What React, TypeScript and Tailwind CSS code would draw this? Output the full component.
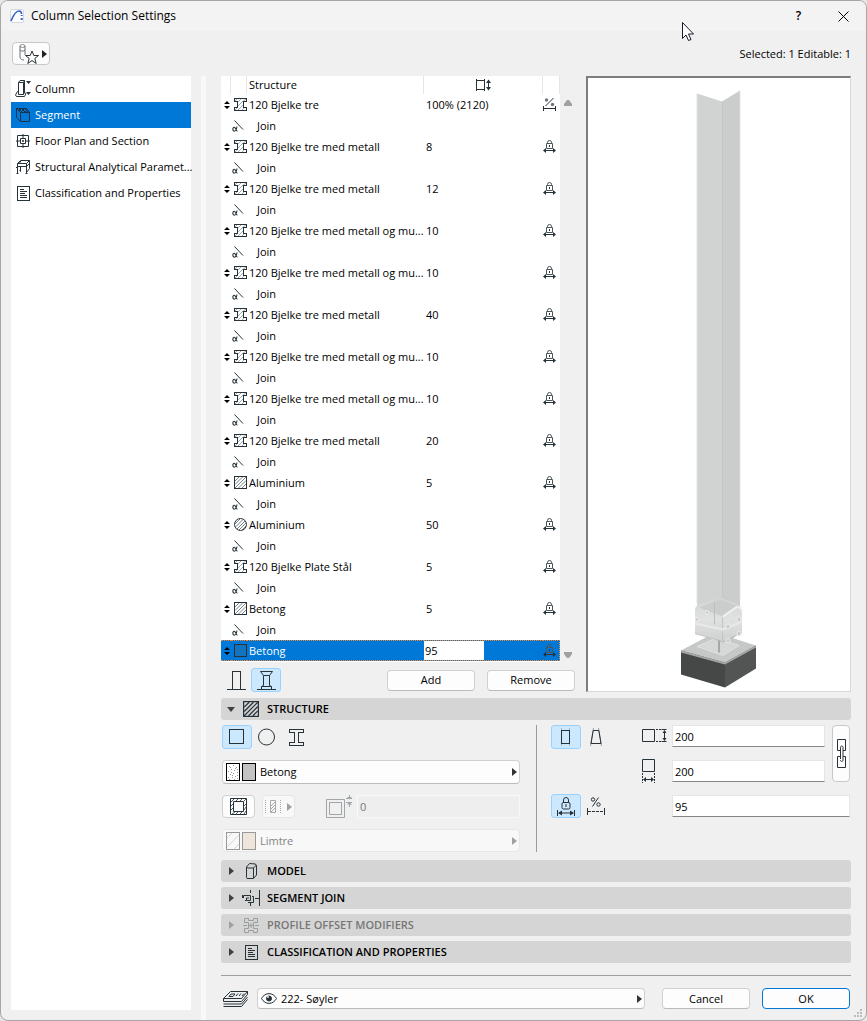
import React, { useState } from 'react';

type IconProps = { className?: string };
type Shape = 'beam' | 'rect' | 'circle';

type SegmentRow = {
  name: string;
  value: string;
  shape: Shape;
};

const segments: SegmentRow[] = [
  { name: '120 Bjelke tre', value: '100% (2120)', shape: 'beam' },
  { name: '120 Bjelke tre med metall', value: '8', shape: 'beam' },
  { name: '120 Bjelke tre med metall', value: '12', shape: 'beam' },
  { name: '120 Bjelke tre med metall og mu...', value: '10', shape: 'beam' },
  { name: '120 Bjelke tre med metall og mu...', value: '10', shape: 'beam' },
  { name: '120 Bjelke tre med metall', value: '40', shape: 'beam' },
  { name: '120 Bjelke tre med metall og mu...', value: '10', shape: 'beam' },
  { name: '120 Bjelke tre med metall og mu...', value: '10', shape: 'beam' },
  { name: '120 Bjelke tre med metall', value: '20', shape: 'beam' },
  { name: 'Aluminium', value: '5', shape: 'rect' },
  { name: 'Aluminium', value: '50', shape: 'circle' },
  { name: '120 Bjelke Plate Stål', value: '5', shape: 'beam' },
  { name: 'Betong', value: '5', shape: 'rect' },
  { name: 'Betong', value: '95', shape: 'rect' },
];

const ink = '#263238';

/* ---------- icons ---------- */

const AppIcon = () => (
  <svg width="14" height="14" viewBox="0 0 14 14" fill="none">
    <rect x="0.500" y="0.500" width="13" height="13" rx="1.500" fill="#fdfdfd" stroke="#d4d8e4" />
    <path d="M1 12C3 7 5.500 2 9 2c2 0 2.500 1 2.500 3" stroke="#3a62c4" strokeWidth="1.700" />
    <path d="M11.700 6v1M11.700 9v2" stroke="#3a62c4" strokeWidth="2" />
  </svg>
);

const FavoriteIcon = () => (
  <svg width="20" height="20" viewBox="0 0 20 20" fill="none" stroke={ink}>
    <ellipse cx="3.500" cy="2" rx="2.500" ry="1.500" stroke="#8a9094" />
    <path d="M1 2v11c0 2 2 3 4 3M6 2v9M1 6c1 1.500 4 1.500 5 0" stroke="#6a7276" />
    <path d="M13 7l1.800 4.500h4.700l-3.700 3 1.400 5-4.200-3-4.200 3 1.400-5-3.700-3h4.700z" fill="#fdfdfd" />
  </svg>
);

const ColumnIcon = () => (
  <svg width="16" height="18" viewBox="0 0 16 18" fill="none" stroke={ink}>
    <path d="M3.500 14.500v-12l1.500-2h4.500v12l-1 2zM3.500 2.500h5M8.500 2.500v12M8.500 2.500l1-2" />
    <path d="M3.500 11.500h-1l-2 3.500 1 1.500h8l1.500-3-1.500-1" />
    <path d="M11 1h5l-2.500 3zM11 12h5l-2.500 3z" fill={ink} stroke="none" />
  </svg>
);

const CubeIcon = () => (
  <svg width="14" height="14" viewBox="0 0 14 14" fill="none" stroke="#1b3348">
    <path d="M4.500 4.500h9v9h-9zM4.500 4.500l-4-4v9l4 4M0.500 0.500h10l3 4" />
    <path d="M3 1l3 3M6 1l3 3M9 1l3 3M5 1L3 3M8 1L5 4M11 2L9 4" />
  </svg>
);

const FloorPlanIcon = () => (
  <svg width="14" height="14" viewBox="0 0 14 14" fill="none" stroke={ink}>
    <path d="M1.500 1.500h11v11h-11zM4.500 4.500h5v5h-5zM7 0v4M7 10v4M0 7h4M10 7h4M6 7h2M7 6v2" />
  </svg>
);

const AnalyticalIcon = () => (
  <svg width="15" height="14" viewBox="0 0 15 14" fill="none" stroke={ink}>
    <path d="M1.500 13.500v-10l3-3h9v8M10.500 13v-9.500M1.500 3.500h9l3-3M1.500 6.500h9l3-3M4.500 6.500v5l-1-1M13.500 8.500l-3 4M3 3.500l2-2.500M0 8l2-2" />
    <path d="M0.500 13.500h2M9.500 13.500h2" />
  </svg>
);

const PropertiesIcon = ({ className }: IconProps) => (
  <svg className={className} width="13" height="15" viewBox="0 0 13 15" fill="none" stroke={ink} shapeRendering="crispEdges">
    <path d="M0.500 0.500h12v14h-12zM3 3.500h4M3 5.500h7M3 7.500h5M3 9.500h7M3 11.500h7" />
  </svg>
);

const BeamHatched = ({ className }: IconProps) => (
  <svg className={className} width="13" height="13" viewBox="0 0 13 13" fill="none" stroke={ink}>
    <path d="M1 3l2-2M4 4l3-3M4 8l5-5M4 12l5-5M8 12l3-3M8 4l4-3M1 12l2-2" stroke="#8a9296" strokeWidth="0.800" />
    <path d="M0.500 0.500h12v3h-3v6h3v3H0.500v-3h3v-6h-3z" shapeRendering="crispEdges" />
  </svg>
);

const RectHatched = ({ size = 13, dark = false }: { size?: number; dark?: boolean }) => (
  <svg width={size} height={size} viewBox="0 0 13 13" fill="none" stroke={ink}>
    <path
      d="M1 5l4-4M1 8.500L8.500 1M1 12L12 1M4.500 12L12 4.500M8 12l4-4"
      stroke={dark ? ink : '#596266'}
      strokeWidth={dark ? 1 : 0.800}
    />
    <rect x="0.500" y="0.500" width="12" height="12" />
  </svg>
);

const CircleHatched = () => (
  <svg width="13" height="13" viewBox="0 0 13 13" fill="none" stroke={ink}>
    <path d="M1 6l5-5M1.500 9L9 1.500M3 11l8-8M5 12l7-7M8 12l4-4" stroke="#596266" strokeWidth="0.800" />
    <circle cx="6.500" cy="6.500" r="6" />
  </svg>
);

const JoinIcon = () => (
  <svg width="12" height="12" viewBox="0 0 12 12" fill="none" stroke={ink}>
    <path d="M2.500 0.500l8.500 9" />
    <path d="M5 6.500C4.600 9 3.700 11.200 2.300 11.200c-1.900 0-1.900-4 0-4 1.400 0 1.600 4 3.200 4" strokeWidth="1.100" />
  </svg>
);

const SortHandle = () => (
  <svg width="6" height="8" viewBox="0 0 6 8" fill="#000">
    <path d="M3 0l3 3H0zM3 8l3-3H0z" />
  </svg>
);

const LockWidth = () => (
  <svg width="13" height="13" viewBox="0 0 13 13" fill="none" stroke={ink}>
    <path d="M4.500 4V2.300a2 1.800 0 0 1 4 0V4M3.500 3.500h6v5h-6z" stroke="#4a5559" />
    <path d="M6.500 5v2M2 10.500h9" />
    <path d="M0 10.500L3 8v5zM13 10.500L10 8v5z" fill={ink} stroke="none" />
  </svg>
);

const PercentWidth = () => (
  <svg width="13" height="13" viewBox="0 0 13 13" fill="none" stroke={ink}>
    <path d="M2.500 8l8-8M0.500 8v5M12.500 8v5M1 10.500h11" />
    <circle cx="3.500" cy="2" r="1.700" fill="#6f777a" stroke="none" />
    <circle cx="9.500" cy="6.500" r="1.700" fill="#6f777a" stroke="none" />
  </svg>
);

const HeightHeader = () => (
  <svg width="15" height="12" viewBox="0 0 15 12" fill="none" stroke={ink}>
    <path d="M0.500 1.500h8v9h-8zM0.500 0v12M8.500 0v12M12.500 3v6" />
    <path d="M12.500 0.500L15 4h-5zM12.500 11.500L15 8h-5z" fill={ink} stroke="none" />
  </svg>
);

const SimpleColumn = () => (
  <svg width="19" height="19" viewBox="0 0 19 19" fill="none" stroke={ink} shapeRendering="crispEdges">
    <path d="M0 18.500h19M5.500 18V0.500h8V18" />
  </svg>
);

const ComplexColumn = () => (
  <svg width="19" height="19" viewBox="0 0 19 19" fill="none" stroke={ink}>
    <path d="M0 18.500h19M3.500 0.500h12M3.500 0.500l3 4v10l-2 1v3M15.500 0.500l-3 4v10l2 1v3M6.500 4.500h6M4.500 15.500h10" />
  </svg>
);

const BoxIcon = () => (
  <svg width="16" height="16" viewBox="0 0 16 16" fill="none" stroke={ink} shapeRendering="crispEdges">
    <rect x="0.500" y="0.500" width="14" height="14" />
  </svg>
);

const CircleIcon = () => (
  <svg width="18" height="18" viewBox="0 0 18 18" fill="none" stroke={ink}>
    <circle cx="8.500" cy="9" r="8" />
  </svg>
);

const ProfileIcon = () => (
  <svg width="16" height="17" viewBox="0 0 16 17" fill="none" stroke={ink} shapeRendering="crispEdges">
    <path d="M0.500 0.500h14v3h-5v10h5v3H0.500v-3h5v-10h-5z" />
  </svg>
);

const VeneerIcon = () => (
  <svg width="17" height="17" viewBox="0 0 17 17" fill="none" stroke={ink}>
    <path d="M0.500 0.500h16v16H0.500zM3.500 3.500h10v10h-10z" />
    <path d="M1 4l3-3M6 3l2-2M10 3l2-2M14 3l2-2M1 8l2-2M1 12l2-2M2 16l3-2M6 16l2-2M10 16l2-2M14 16l2-3M14 8l2-2M14 12l2-3" strokeWidth="0.800" />
  </svg>
);

const VeneerTypeIcon = () => (
  <svg width="16" height="13" viewBox="0 0 16 13" fill="none" stroke="#a5a9ab">
    <path d="M0.500 0v13M15.500 0v13" strokeDasharray="1 1" />
    <path d="M5.500 0.500h5v12h-5zM6 6l4-4M6 9l4-4M6 12l4-4" />
  </svg>
);

const ThicknessIcon = () => (
  <svg width="26" height="24" viewBox="0 0 26 24" fill="none" stroke="#a0a5a7">
    <path d="M0.500 4.500h18v18h-18zM3.500 7.500h12v12h-12zM20 3.500h6M20 7.500h6M23.500 0v3M23.500 8v4" />
    <path d="M21 2h5l-2.500 2.500zM21 9.500h5L23.500 7z" fill="#a0a5a7" stroke="none" />
  </svg>
);

const StraightSegment = () => (
  <svg width="10" height="18" viewBox="0 0 10 18" fill="none" stroke={ink} shapeRendering="crispEdges">
    <path d="M0.500 0v18M8.500 0v18" stroke="#9db6c8" />
    <path d="M0.500 2.500h8v13h-8z" />
  </svg>
);

const TaperedSegment = () => (
  <svg width="12" height="18" viewBox="0 0 12 18" fill="none" stroke={ink}>
    <path d="M3.500 0l-3 18M8.500 0l3 18" stroke="#9aa1a4" />
    <path d="M3.200 2.500h5.600l2.200 13H1z" />
  </svg>
);

const DepthIcon = () => (
  <svg width="25" height="14" viewBox="0 0 25 14" fill="none" stroke={ink}>
    <path d="M0.500 0.500h12v12h-12zM22.500 2v9M19.500 0.500h5M19.500 12.500h5" />
    <path d="M14 0.500h6M14 12.500h6" strokeDasharray="2 1" />
    <path d="M22.500 1l2 3h-4zM22.500 12l2-3h-4z" fill={ink} stroke="none" />
  </svg>
);

const WidthIcon = () => (
  <svg width="13" height="24" viewBox="0 0 13 24" fill="none" stroke={ink}>
    <path d="M0.500 0.500h12v12h-12zM2 20.500h9" />
    <path d="M0.500 14v10M12.500 14v10" strokeDasharray="2 1" />
    <path d="M1 20.500l3-2.500v5zM12 20.500L9 18v5z" fill={ink} stroke="none" />
  </svg>
);

const LockLengthIcon = () => (
  <svg width="18" height="19" viewBox="0 0 18 19" fill="none" stroke={ink}>
    <path d="M6.500 6V3a2.500 2.500 0 0 1 5 0V6M0.500 13v6M17.500 13v6M2 16h14M9 7v3" />
    <rect x="5" y="5.500" width="8" height="6.500" rx="1.500" />
    <path d="M1 16l4-2.500v5zM17 16l-4-2.500v5z" fill={ink} stroke="none" />
  </svg>
);

const PercentLengthIcon = () => (
  <svg width="18" height="18" viewBox="0 0 18 18" fill="none" stroke={ink}>
    <path d="M5.500 9.500l6-9M0.500 11v7M17.500 11v7" />
    <path d="M1 14.500h16" strokeDasharray="3 1" />
    <circle cx="6" cy="2.500" r="1.700" />
    <circle cx="11.500" cy="7.500" r="1.700" />
  </svg>
);

const ChainIcon = () => (
  <svg width="9" height="29" viewBox="0 0 9 29" fill="none" stroke={ink}>
    <path d="M3 11.500H0.500v-11h8v11H6M3 17.500H0.500v11h8v-11H6" />
    <path d="M3.500 20V8.500c0-2 2.500-2 2.500 0V21c0 2-2.500 2-2.500 0" />
  </svg>
);

const ModelIcon = () => (
  <svg width="11" height="16" viewBox="0 0 11 16" fill="none" stroke={ink}>
    <path d="M0.500 4l3-3.500 6 0.500 1 2v9l-3 3.500H1l-0.500-1zM0.500 4l1 1h6l3-3M7.500 5v10" />
  </svg>
);

const SegmentJoinIcon = () => (
  <svg width="18" height="16" viewBox="0 0 18 16" fill="none" stroke={ink}>
    <path d="M8.500 0v3M8.500 13v3M17.500 0v16M13 8.500h4" />
    <path d="M1.500 8V5.500h7v5h-4v-2.500h2.500M0.500 5v3M3 10.500h1.500M6 12.500h5.500v-6H10" />
  </svg>
);

const OffsetIcon = () => (
  <svg width="16" height="15" viewBox="0 0 16 15" fill="none" stroke="#9a9d9e">
    <path d="M1.500 0.500h4v2h5v-2h4v4h-4v6h4v4h-4v-2h-5v2h-4v-4h4v-6h-4zM8 5v5M0 7.500h4M6 7.500h4M12 7.500h4" />
  </svg>
);

const LayersIcon = () => (
  <svg width="26" height="16" viewBox="0 0 26 16" fill="none" stroke={ink}>
    <path d="M7.500 0.500h17l-6 7h-18zM0.500 10.500h18l6-7M0.500 13h18l6-7M0.500 15.500h18l6-7M0.500 7.500v3M24.500 0.500v3" />
    <path d="M8 3h4l-2 2.500H6zM13 5l2-2.500M16 5l2-2.500M19 5l2-2.500" />
  </svg>
);

const EyeIcon = () => (
  <svg width="16" height="11" viewBox="0 0 16 11" fill="none" stroke={ink}>
    <path d="M0.500 5.500C4-1 12-1 15.500 5.500 12 12 4 12 0.500 5.500z" />
    <circle cx="8" cy="5.500" r="2.500" fill={ink} />
    <circle cx="7" cy="4" r="0.900" fill="#fff" stroke="none" />
  </svg>
);

const ArrowRight = ({ className }: IconProps) => (
  <svg className={className} width="5" height="8" viewBox="0 0 5 8" fill="currentColor">
    <path d="M0 0l5 4-5 4z" />
  </svg>
);

const ArrowDown = ({ className }: IconProps) => (
  <svg className={className} width="8" height="5" viewBox="0 0 8 5" fill="currentColor">
    <path d="M0 0h8L4 5z" />
  </svg>
);

const ScrollArrow = ({ className }: IconProps) => (
  <svg className={className} width="8" height="6" viewBox="0 0 8 6" fill="currentColor">
    <path d="M0 0h8v2L5 6H3L0 2z" />
  </svg>
);

const ConcreteSwatch = () => (
  <svg width="14" height="18" viewBox="0 0 14 18" fill="none" shapeRendering="crispEdges">
    <rect x="0.500" y="0.500" width="13" height="17" fill="#fff" stroke="#000" />
    <path
      d="M3 3h1M7 2h1M10 4h1M5 6h1M2 8h1M8 7h1M11 9h1M4 11h1M7 10h1M2 14h1M6 14h1M9 13h1M11 15h1M4 4h1M9 5h1M6 12h1M11 12h1M3 16h1M8 16h1M5 9h1M11 6h1"
      stroke="#999"
    />
  </svg>
);

const WoodSwatch = () => (
  <svg width="14" height="18" viewBox="0 0 14 18" fill="none">
    <path d="M1 6l5-5M1 15L13 3M8 17l5-5" stroke="#d6d6d6" />
    <rect x="0.500" y="0.500" width="13" height="17" stroke="#999" />
  </svg>
);

const shapeIcons: Record<Shape, React.ReactNode> = {
  beam: <BeamHatched />,
  rect: <RectHatched />,
  circle: <CircleHatched />,
};

/* ---------- 3D preview ---------- */

const Preview = () => (
  <svg className="w-full h-full" viewBox="0 0 262 612" fill="none" role="img" aria-label="Column preview">
    <defs>
      <linearGradient id="bracket" x1="0" y1="0" x2="0" y2="1">
        <stop offset="0" stopColor="#d3d5d4" />
        <stop offset="0.500" stopColor="#e0e1e1" />
        <stop offset="1" stopColor="#cfd1d0" />
      </linearGradient>
    </defs>
    {/* footing */}
    <path d="M93 572l34-18 41 13-31 17z" fill="#c5c8c7" />
    <path d="M93 572l44 12v25l-44-13z" fill="#464848" />
    <path d="M137 584l31-17v23l-31 19z" fill="#535555" />
    <path d="M93 572l44 12 31-17v2l-31 17-44-12z" fill="#a3a6a5" />
    {/* base plate */}
    <path d="M109 568l20-9 22 8-16 10z" fill="#d6d8d7" stroke="#dfe0e0" />
    <path d="M117 557l14-5 17 6-13 6z" fill="#b2b5b4" />
    {/* column */}
    <path d="M109 15l25 8v520l-25-8z" fill="#d0d3d2" />
    <path d="M134 23l18-11v520l-18 11z" fill="#cbcccc" />
    <path d="M109 15v510M152 12v510" stroke="#e2e3e3" />
    <path d="M134.500 23v505" stroke="#c3c6c5" />
    {/* bracket */}
    <path d="M107 532q0-5 4-6l21-7 20 8q2 2 2 5v22l-19 9-28-8z" fill="url(#bracket)" />
    <path d="M111 529l21-8 19 7-16 10z" fill="#cbcdcc" />
    <path d="M107 555l28 8 19-9M134.500 539v23" stroke="#c3c5c5" />
    <path d="M107 545l28 6 19-8" stroke="#e9e9e9" strokeWidth="2" />
    <path d="M135 538l13-9q6-1 6 4" stroke="#f2f2f2" strokeWidth="2" />
    <path d="M126.500 524v22" stroke="#bcbebe" />
    <path d="M131 562v12" stroke="#a5a8a7" strokeWidth="2" />
    <g fill="#c8caca" stroke="#eeeeee">
      <ellipse cx="140" cy="548" rx="2" ry="2.500" />
      <ellipse cx="140" cy="562" rx="2" ry="2.500" />
      <ellipse cx="151" cy="541" rx="2" ry="2.500" />
      <ellipse cx="151" cy="555" rx="2" ry="2.500" />
      <ellipse cx="119" cy="534" rx="1.500" ry="2" />
      <ellipse cx="109" cy="541" rx="1.500" ry="2" />
    </g>
  </svg>
);

/* ---------- building blocks ---------- */

const PushButton = ({ children, primary, className }: { children: React.ReactNode; primary?: boolean; className?: string }) => (
  <button
    className={`h-[21px] w-[88px] rounded border bg-[#fdfdfd] text-center hover:bg-white ${
      primary ? 'border-[#0078d7]' : 'border-[#d0d0d0] border-b-[#bbb]'
    } ${className ?? ''}`}
  >
    {children}
  </button>
);

const ToggleButton = ({
  label,
  active,
  onClick,
  children,
}: {
  label: string;
  active: boolean;
  onClick: () => void;
  children: React.ReactNode;
}) => (
  <button
    aria-label={label}
    aria-pressed={active}
    onClick={onClick}
    className={`flex h-6 w-[30px] items-center justify-center rounded-[3px] border ${
      active ? 'border-[#99d1ff] bg-[#cce8ff]' : 'border-transparent'
    }`}
  >
    {children}
  </button>
);

const DropDown = ({
  label,
  value,
  disabled,
  className,
  children,
}: {
  label: string;
  value: string;
  disabled?: boolean;
  className?: string;
  children: React.ReactNode;
}) => (
  <label
    className={`flex items-center rounded border pr-[2px] pl-[3px] ${
      disabled ? 'border-[#e6e6e6] bg-[#f8f8f8] text-[#838383]' : 'border-[#d0d0d0] border-b-[#bbb] bg-[#fdfdfd]'
    } ${className ?? ''}`}
  >
    {children}
    <select aria-label={label} disabled={disabled} className="ml-1 min-w-0 flex-1 appearance-none bg-transparent opacity-100 outline-none">
      <option>{value}</option>
    </select>
    <ArrowRight className={disabled ? 'text-[#a0a0a0]' : 'text-[#333]'} />
  </label>
);

const NumberField = ({ label, value }: { label: string; value: string }) => (
  <input
    aria-label={label}
    defaultValue={value}
    className="h-[22px] w-full min-w-0 border border-[#e5e5e5] border-b-[#868686] bg-white px-[2px] outline-none"
  />
);

const SectionHeader = ({
  title,
  icon,
  open,
  disabled,
}: {
  title: string;
  icon: React.ReactNode;
  open?: boolean;
  disabled?: boolean;
}) => (
  <button
    disabled={disabled}
    aria-expanded={!!open}
    className={`flex h-[22px] w-full items-center rounded-[3px] bg-[#d5d5d5] pl-[5px] font-semibold ${
      disabled ? 'text-[#777]' : 'text-black'
    }`}
  >
    <span className="flex w-[10px] justify-center">
      {open ? <ArrowDown className="text-[#404040]" /> : <ArrowRight className={disabled ? 'text-[#a0a0a0]' : 'text-[#404040]'} />}
    </span>
    <span className="mx-[6px] flex w-[18px] justify-center">{icon}</span>
    <span className="ml-px">{title}</span>
  </button>
);

/* ---------- panels ---------- */

const navItems = [
  { name: 'Column', icon: <ColumnIcon /> },
  { name: 'Segment', icon: <CubeIcon /> },
  { name: 'Floor Plan and Section', icon: <FloorPlanIcon /> },
  { name: 'Structural Analytical Paramet...', icon: <AnalyticalIcon /> },
  { name: 'Classification and Properties', icon: <PropertiesIcon /> },
];

const Sidebar = () => {
  const [current, setCurrent] = useState('Segment');

  return (
    <nav className="w-[180px] shrink-0 bg-white">
      {navItems.map((item) => (
        <button
          key={item.name}
          onClick={() => setCurrent(item.name)}
          className={`flex h-[26px] w-full items-center whitespace-nowrap ${
            current === item.name ? 'bg-[#0078d7] text-white' : ''
          }`}
        >
          <span className="flex w-6 shrink-0 justify-center">{item.icon}</span>
          {item.name}
        </button>
      ))}
    </nav>
  );
};

const SegmentTable = () => (
  <div className="flex">
    <div className="flex-1 bg-white pb-px">
      <table className="w-full table-fixed border-separate border-spacing-0">
        <colgroup>
          <col className="w-[10px]" />
          <col className="w-[16px]" />
          <col className="w-[177px]" />
          <col />
          <col className="w-[17px]" />
        </colgroup>
        <thead>
          <tr className="h-[18px]">
            <th className="border-r border-[#e5e5e5] p-0" />
            <th className="border-r border-[#e5e5e5] p-0" />
            <th className="border-r border-[#e5e5e5] p-0 pl-[2px] text-left font-normal">Structure</th>
            <th className="border-r border-[#e5e5e5] p-0" aria-label="Height">
              <div className="flex justify-center"><HeightHeader /></div>
            </th>
            <th className="border-r border-[#e5e5e5] p-0" />
          </tr>
        </thead>
        <tbody>
          {segments.map((seg, i) => {
            const selected = i === segments.length - 1;
            const cell = selected ? 'border-y border-dotted border-[#ff8728] p-0' : 'p-0';
            return (
              <React.Fragment key={i}>
                <tr className={`h-[21px] ${selected ? 'bg-[#0078d7] text-white' : ''}`}>
                  <td className={cell}><div className="flex justify-end pr-px"><SortHandle /></div></td>
                  <td className={cell}><div className="flex justify-end">{shapeIcons[seg.shape]}</div></td>
                  <td className={`overflow-hidden whitespace-nowrap ${cell}`}><div className="pl-[2px]">{seg.name}</div></td>
                  <td className={cell}>
                    {selected ? (
                      <input
                        aria-label="Segment length"
                        defaultValue={seg.value}
                        className="block h-[19px] w-[60px] bg-white px-px text-black outline-none"
                      />
                    ) : (
                      <span className="pl-[2px]">{seg.value}</span>
                    )}
                  </td>
                  <td className={`${cell} ${selected ? 'border-r' : ''}`}>
                    <div className="flex">{i === 0 ? <PercentWidth /> : <LockWidth />}</div>
                  </td>
                </tr>
                {!selected && (
                  <tr className="h-[21px]">
                    <td className="p-0" colSpan={2}><div className="flex pl-[11px]"><JoinIcon /></div></td>
                    <td className="p-0"><div className="pl-[10px]">Join</div></td>
                    <td className="p-0" />
                    <td className="p-0" />
                  </tr>
                )}
              </React.Fragment>
            );
          })}
        </tbody>
      </table>
    </div>
    <div className="flex w-[15px] flex-col items-center justify-between pt-6 pb-1 text-[#a0a0a0]">
      <ScrollArrow className="rotate-180" />
      <ScrollArrow />
    </div>
  </div>
);

const StructurePanel = () => {
  const [shape, setShape] = useState('rect');
  const [taper, setTaper] = useState('straight');
  const [length, setLength] = useState('fixed');

  return (
    <div className="flex py-[5px] pr-px">
      <div className="flex w-[299px] shrink-0 flex-col gap-[11px] pl-px">
        <div className="flex">
          <ToggleButton label="Rectangle" active={shape === 'rect'} onClick={() => setShape('rect')}><BoxIcon /></ToggleButton>
          <ToggleButton label="Circle" active={shape === 'circle'} onClick={() => setShape('circle')}><CircleIcon /></ToggleButton>
          <ToggleButton label="Profile" active={shape === 'profile'} onClick={() => setShape('profile')}><ProfileIcon /></ToggleButton>
        </div>
        <DropDown label="Building material" value="Betong" className="h-6">
          <ConcreteSwatch />
          <span className="ml-[2px] h-[18px] w-[14px] border border-black bg-[#c3c3c3]" />
        </DropDown>
        <div className="flex h-[23px]">
          <button aria-label="Veneer" className="flex w-[33px] items-center justify-center rounded border border-[#d0d0d0] bg-[#fdfdfd]">
            <VeneerIcon />
          </button>
          <button aria-label="Veneer type" disabled className="ml-[7px] flex w-[33px] items-center justify-center gap-[6px] rounded border border-[#e6e6e6] bg-[#f8f8f8] text-[#a0a0a0]">
            <VeneerTypeIcon />
            <ArrowRight />
          </button>
          <div className="ml-[31px] flex w-[31px] items-center"><ThicknessIcon /></div>
          <input
            aria-label="Veneer thickness"
            disabled
            defaultValue="0"
            className="min-w-0 flex-1 border border-[#f8f8f8] bg-[#eee] px-[2px] text-[#777]"
          />
        </div>
        <DropDown label="Veneer material" value="Limtre" disabled className="h-[23px]">
          <WoodSwatch />
          <span className="ml-[2px] h-[18px] w-[14px] border border-[#999] bg-[#eee6da]" />
        </DropDown>
      </div>

      <div className="ml-4 w-px bg-[#9b9b9b]" />

      <div className="ml-[14px] flex w-[60px] shrink-0 flex-col justify-between pb-[34px]">
        <div className="flex">
          <ToggleButton label="Uniform" active={taper === 'straight'} onClick={() => setTaper('straight')}><StraightSegment /></ToggleButton>
          <ToggleButton label="Tapered" active={taper === 'tapered'} onClick={() => setTaper('tapered')}><TaperedSegment /></ToggleButton>
        </div>
        <div className="flex">
          <ToggleButton label="Fixed length" active={length === 'fixed'} onClick={() => setLength('fixed')}><LockLengthIcon /></ToggleButton>
          <ToggleButton label="Proportional length" active={length === 'percent'} onClick={() => setLength('percent')}><PercentLengthIcon /></ToggleButton>
        </div>
      </div>

      <div className="ml-[31px] flex flex-1 flex-col gap-[13px]">
        <div className="flex">
          <div className="flex flex-1 flex-col gap-[13px]">
            <div className="flex h-[22px] items-center">
              <span className="w-[30px] shrink-0"><DepthIcon /></span>
              <NumberField label="Depth" value="200" />
            </div>
            <div className="flex h-[22px] items-center">
              <span className="w-[30px] shrink-0"><WidthIcon /></span>
              <NumberField label="Width" value="200" />
            </div>
          </div>
          <button aria-label="Keep proportion" className="ml-[7px] flex w-[18px] items-center justify-center rounded border border-[#c8c8c8] bg-[#fdfdfd]">
            <ChainIcon />
          </button>
        </div>
        <div className="pl-[30px]"><NumberField label="Segment height" value="95" /></div>
      </div>
    </div>
  );
};

const App = () => {
  const [complex, setComplex] = useState(true);

  return (
    <div className="bg-[#e3e5e6]">
      <div className="relative flex min-h-screen flex-col overflow-hidden rounded-lg border border-[#a6a6a6] bg-[#f0f0f0] font-['Open_Sans','Noto_Sans',sans-serif] text-[11px] leading-4 text-black">
        <header className="flex h-[30px] shrink-0 items-center bg-[#f3f3f3] pl-[9px]">
          <AppIcon />
          <h1 className="ml-[7px] flex-1 text-xs">Column Selection Settings</h1>
          <button aria-label="Help" className="w-[45px] text-xs font-semibold">?</button>
          <button aria-label="Close" className="flex w-[45px] justify-center">
            <svg width="11" height="11" viewBox="0 0 11 11" fill="none" stroke="#000">
              <path d="M0.500 0.500l10 10M10.500 0.500l-10 10" />
            </svg>
          </button>
        </header>

        <div className="flex h-[45px] shrink-0 items-center justify-between pr-[15px] pl-[11px]">
          <button aria-label="Favorites" className="flex h-[23px] w-[38px] items-center justify-end gap-[3px] rounded border border-[#c8c8c8] bg-[#fdfdfd] pr-[2px] text-[#222]">
            <FavoriteIcon />
            <ArrowRight />
          </button>
          <span>Selected: 1 Editable: 1</span>
        </div>

        <div className="flex flex-1 pr-[15px] pl-[10px]">
          <div className="flex pb-[10px]"><Sidebar /></div>
          <div className="ml-[10px] w-[5px] bg-[#f8f8f8]" />

          <main className="ml-[15px] flex min-w-0 flex-1 flex-col">
            <section className="flex">
              <div className="w-[354px] shrink-0">
                <SegmentTable />
                <div className="mt-[6px] flex items-center">
                  <ToggleButton label="Single segment" active={!complex} onClick={() => setComplex(false)}><SimpleColumn /></ToggleButton>
                  <ToggleButton label="Multi segment" active={complex} onClick={() => setComplex(true)}><ComplexColumn /></ToggleButton>
                  <PushButton className="ml-auto">Add</PushButton>
                  <PushButton className="ml-3">Remove</PushButton>
                </div>
              </div>
              <div className="ml-[11px] min-w-0 flex-1 border-t-2 border-r border-b border-l-2 border-t-[#7d7d7d] border-r-[#d8d8d8] border-b-[#d8d8d8] border-l-[#7d7d7d] bg-white">
                <Preview />
              </div>
            </section>

            <section className="mt-[6px]">
              <SectionHeader title="STRUCTURE" open icon={<RectHatched size={16} dark />} />
              <StructurePanel />
            </section>

            <div className="mt-[3px] flex flex-col gap-[5px]">
              <SectionHeader title="MODEL" icon={<ModelIcon />} />
              <SectionHeader title="SEGMENT JOIN" icon={<SegmentJoinIcon />} />
              <SectionHeader title="PROFILE OFFSET MODIFIERS" icon={<OffsetIcon />} disabled />
              <SectionHeader title="CLASSIFICATION AND PROPERTIES" icon={<PropertiesIcon />} />
            </div>

            <footer className="mt-3 flex items-center border-t border-[#a0a0a0] pt-3 pr-px pb-[11px]">
              <span className="w-9 pl-[2px]"><LayersIcon /></span>
              <DropDown label="Layer" value="222- Søyler" className="h-[21px] flex-1">
                <EyeIcon />
              </DropDown>
              <PushButton className="ml-[17px]">Cancel</PushButton>
              <PushButton primary className="ml-3">OK</PushButton>
            </footer>
          </main>
        </div>

        {/* size grip */}
        <svg className="absolute right-[3px] bottom-[2px]" width="9" height="9" viewBox="0 0 9 9" fill="#bdbdbd">
          <path d="M6 0h2v2H6zM3 3h2v2H3zM6 3h2v2H6zM0 6h2v2H0zM3 6h2v2H3zM6 6h2v2H6z" />
        </svg>

        {/* mouse pointer */}
        <svg className="absolute top-[21px] right-[171px]" width="13" height="20" viewBox="0 0 13 20" fill="#fff" stroke="#1a1a2a">
          <path d="M0.500 0.500v16l3.500-3.500 2.500 5.500 2.500-1-2.500-5.500h5z" />
        </svg>
      </div>
    </div>
  );
};

export default App;
